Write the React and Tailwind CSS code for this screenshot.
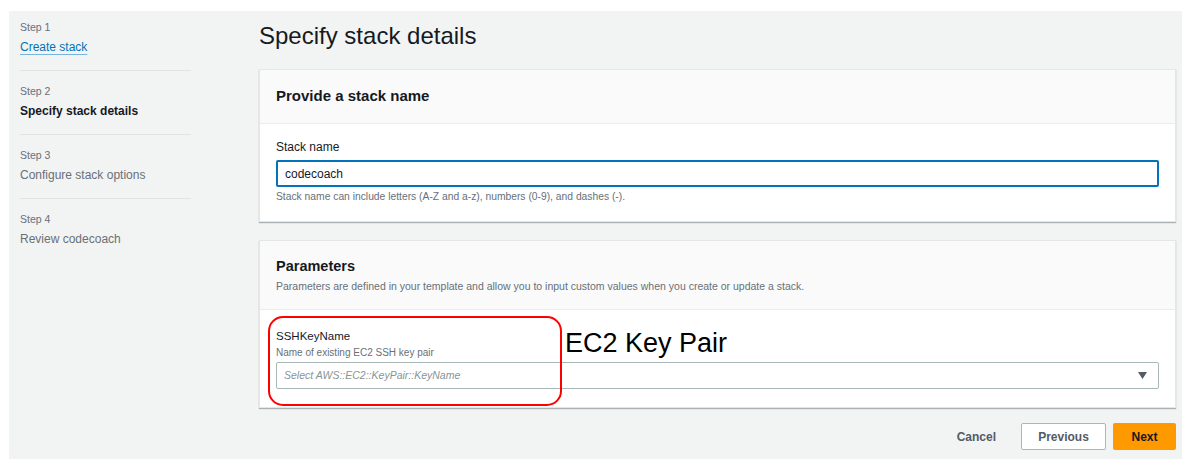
import React from 'react';

const steps = [
  { step: 'Step 1', label: 'Create stack', state: 'done' },
  { step: 'Step 2', label: 'Specify stack details', state: 'current' },
  { step: 'Step 3', label: 'Configure stack options', state: 'todo' },
  { step: 'Step 4', label: 'Review codecoach', state: 'todo' },
];

const StepNav = () => (
  <nav className="w-[250px] shrink-0 pl-[11px] pt-[8px]">
    <ul className="w-[171px]">
      {steps.map((s, i) => (
        <li
          key={s.step}
          className={`pb-[13px] ${i > 0 ? 'pt-[12px]' : ''} ${i < steps.length - 1 ? 'border-b border-[#dfe3e3]' : ''}`}
        >
          <div className="text-[10.5px] leading-[16px] text-[#687078]">{s.step}</div>
          <div className="mt-[2px] text-[12px] leading-[20px]">
            {s.state === 'done' && (
              <a href="#" className="text-[#0073bb] underline decoration-[#79b4dc] underline-offset-[3px]">
                {s.label}
              </a>
            )}
            {s.state === 'current' && <span className="font-bold text-[#16191f]">{s.label}</span>}
            {s.state === 'todo' && <span className="text-[#687078]">{s.label}</span>}
          </div>
        </li>
      ))}
    </ul>
  </nav>
);

const Card = ({ children }) => (
  <div className="relative bg-white border border-[#e3e7e7] shadow-[0_1px_1px_rgba(0,28,36,0.3)]">{children}</div>
);

export default function App() {
  return (
    <div
      className="w-[1186px] h-[470px] bg-white pt-[11px] pb-[11px] pl-[9px] pr-[4px]"
      style={{ fontFamily: '"Liberation Sans", Arial, sans-serif' }}
    >
      <div className="flex h-full bg-[#f2f3f3] text-[#16191f]">
        <StepNav />

        <main className="flex-1 pr-[6px] pt-[10px]">
          <h1 className="text-[24px] leading-[30px] font-normal">Specify stack details</h1>

          <div className="mt-[18px]">
            <Card>
              <div className="h-[54px] flex items-center pb-[2px] px-[16px] bg-[#fafafa] border-b border-[#eaeded]">
                <h2 className="text-[15px] leading-[20px] font-bold">Provide a stack name</h2>
              </div>
              <div className="px-[16px] pt-[14px] pb-[17px]">
                <label className="block text-[12px] leading-[18px]">Stack name</label>
                <div className="mt-[4px] h-[27px] flex items-center px-[7px] border-2 border-[#0073bb] rounded-[2px] text-[12px]">
                  codecoach
                </div>
                <p className="mt-[3px] text-[10.3px] leading-[14px] text-[#687078]">
                  Stack name can include letters (A-Z and a-z), numbers (0-9), and dashes (-).
                </p>
              </div>
            </Card>
          </div>

          <div className="mt-[18px]">
            <Card>
              <div className="px-[16px] pt-[15px] pb-[15px] bg-[#fafafa] border-b border-[#eaeded]">
                <h2 className="text-[14.5px] leading-[20px] font-bold">Parameters</h2>
                <p className="mt-[2px] text-[10.5px] leading-[16px] text-[#687078]">
                  Parameters are defined in your template and allow you to input custom values when you create or update a stack.
                </p>
              </div>
              <div className="relative px-[16px] pt-[18px] pb-[18px]">
                <div className="text-[11.5px] leading-[16px]">SSHKeyName</div>
                <div className="mt-[2px] text-[10px] leading-[14px] text-[#687078]">Name of existing EC2 SSH key pair</div>
                <div className="mt-[2px] h-[27px] flex items-center justify-between pl-[7px] pr-[11px] border border-[#aab7b8] rounded-[2px]">
                  <span className="text-[10.5px] italic text-[#879596]">Select AWS::EC2::KeyPair::KeyName</span>
                  <svg width="9" height="7" viewBox="0 0 9 7">
                    <path d="M0 0 H9 L4.5 7 Z" fill="#545b64" />
                  </svg>
                </div>

                <div className="absolute left-[8px] top-[6px] w-[294px] h-[90px] border-2 border-[#f00] rounded-[15px] pointer-events-none" />
                <div className="absolute left-[305px] top-[17px] text-[27px] leading-[32px] text-black">EC2 Key Pair</div>
              </div>
            </Card>
          </div>

          <div className="mt-[15px] flex justify-end items-center">
            <button className="h-[27px] px-[18px] text-[12px] font-bold text-[#545b64]">Cancel</button>
            <button className="ml-[7px] h-[27px] w-[85px] bg-white border border-[#aab7b8] rounded-[2px] text-[12px] font-bold text-[#545b64]">
              Previous
            </button>
            <button className="ml-[7px] h-[27px] w-[63px] bg-[#ff9900] rounded-[2px] text-[12px] font-bold text-[#16191f]">
              Next
            </button>
          </div>
        </main>
      </div>
    </div>
  );
}
